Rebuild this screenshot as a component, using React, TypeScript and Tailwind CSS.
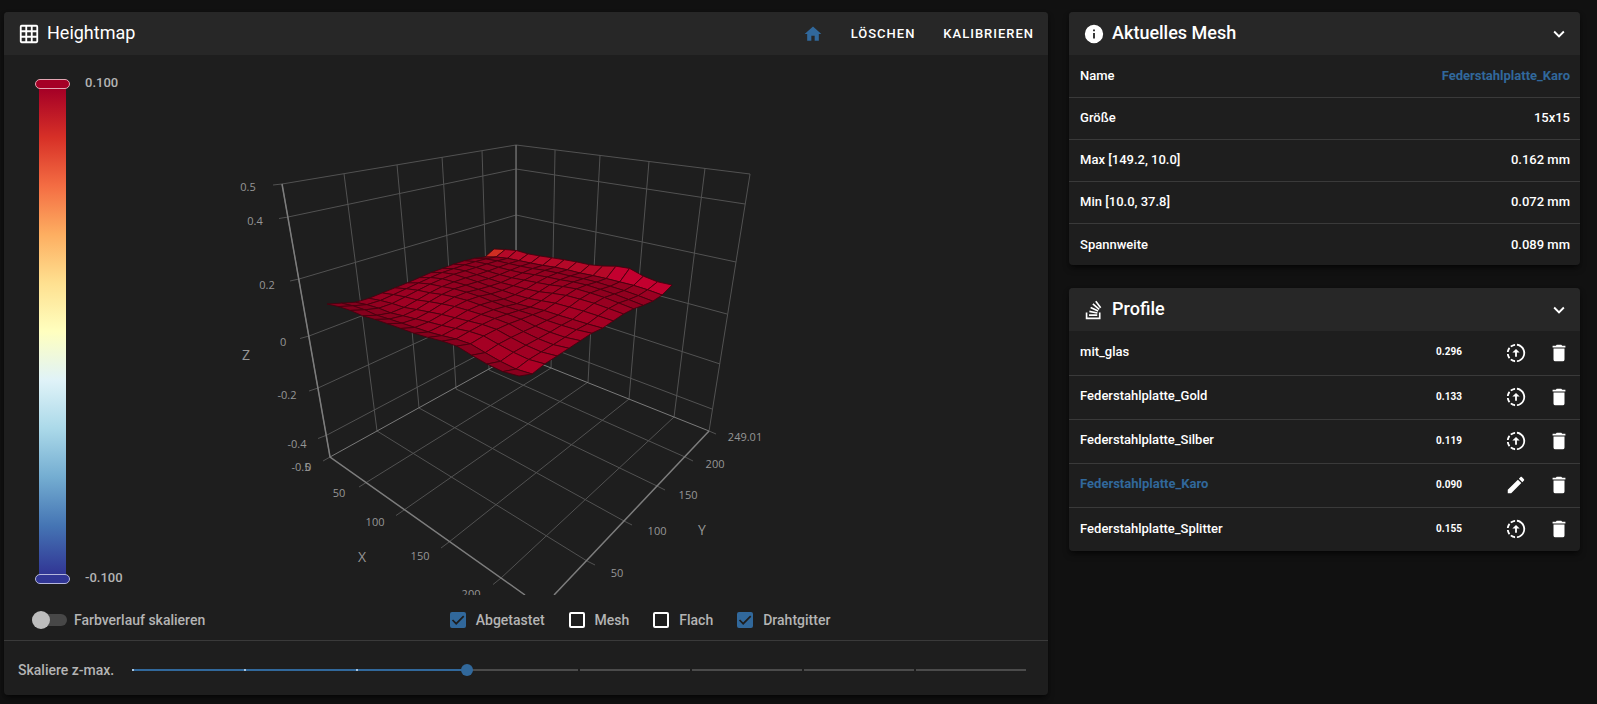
import { useState } from "react";
import type { ReactNode } from "react";

type Pt = [number, number];

const icons = {
  grid: "M10,4V8H14V4H10M16,4V8H20V4H16M16,10V14H20V10H16M16,16V20H20V16H16M14,20V16H10V20H14M8,20V16H4V20H8M8,14V10H4V14H8M8,8V4H4V8H8M10,14H14V10H10V14M4,2H20A2,2 0 0,1 22,4V20A2,2 0 0,1 20,22H4C2.92,22 2,21.1 2,20V4A2,2 0 0,1 4,2Z",
  home: "M10,20V14H14V20H19V12H22L12,3L2,12H5V20H10Z",
  info: "M13,9H11V7H13M13,17H11V11H13M12,2A10,10 0 0,0 2,12A10,10 0 0,0 12,22A10,10 0 0,0 22,12A10,10 0 0,0 12,2Z",
  stack: "M17.36,20.2V14.82H19.15V22H3V14.82H4.8V20.2H17.36M6.77,14.32L7.14,12.56L15.93,14.41L15.56,16.17L6.77,14.32M7.93,10.11L8.69,8.5L16.83,12.28L16.07,13.9L7.93,10.11M10.19,6.12L11.34,4.74L18.24,10.5L17.09,11.87L10.19,6.12M14.64,1.87L20,9.08L18.56,10.15L13.2,2.94L14.64,1.87M6.59,18.41V16.61H15.57V18.41H6.59Z",
  chevron: "M7.41,8.58L12,13.17L16.59,8.58L18,10L12,16L6,10L7.41,8.58Z",
  remove: "M19,4H15.5L14.5,3H9.5L8.5,4H5V6H19M6,19A2,2 0 0,0 8,21H16A2,2 0 0,0 18,19V7H6V19Z",
  pencil: "M20.71,7.04C21.1,6.65 21.1,6 20.71,5.63L18.37,3.29C18,2.9 17.35,2.9 16.96,3.29L15.12,5.12L18.87,8.87M3,17.25V21H6.75L17.81,9.93L14.06,6.18L3,17.25Z",
  upload: "M13,2.03V4.05C17.39,4.59 20.5,8.58 19.96,12.97C19.5,16.61 16.64,19.5 13,19.93V21.93C18.5,21.38 22.5,16.5 21.95,11C21.5,6.25 17.73,2.5 13,2.03M11,2.06C9.05,2.25 7.19,3 5.67,4.26L7.1,5.74C8.22,4.84 9.57,4.26 11,4.06V2.06M4.26,5.67C3,7.19 2.25,9.04 2.05,11H4.05C4.24,9.58 4.8,8.23 5.69,7.1L4.26,5.67M2.06,13C2.26,14.96 3.03,16.81 4.27,18.33L5.69,16.9C4.81,15.77 4.24,14.42 4.06,13H2.06M7.1,18.37L5.67,19.74C7.18,21 9.04,21.79 11,22V20C9.58,19.82 8.23,19.25 7.1,18.37M12,7.5L16,11.5H13V16H11V11.5H8L12,7.5Z",
};

function Icon({ d, className = "size-[22px]" }: { d: string; className?: string }) {
  return (
    <svg viewBox="0 0 24 24" fill="currentColor" aria-hidden="true" className={className}>
      <path d={d} />
    </svg>
  );
}

/* ── Surface plot ── */

// Box edges of the plot, projected to the drawing plane
const leftTop: Pt[] = [[282, 184], [344, 174], [397, 165], [442, 157], [482, 151], [516, 145]];
const leftBottom: Pt[] = [[330, 457], [377, 431], [419, 408], [456, 389], [489, 370], [516, 354]];
const rightTop: Pt[] = [[516, 145], [555, 150], [600, 155], [649, 161], [705, 168], [750, 174]];
const rightBottom: Pt[] = [[516, 354], [551, 368], [588, 382], [629, 399], [674, 417], [709, 431]];
const zLeft: Pt[] = [[282, 184], [288, 217], [299, 279], [309, 336], [318, 388], [327, 435]];
const zBack: Pt[] = [[516, 145], [516, 169], [516, 215], [516, 257], [516, 297], [516, 335]];
const zRight: Pt[] = [[750, 174], [745, 204], [736, 262], [727, 314], [720, 364], [712, 409]];
const xAxis: Pt[] = [[367, 482], [404, 510], [449, 542], [501, 578]];
const yAxis: Pt[] = [[587, 561], [624, 521], [657, 486], [685, 457]];

const gridLines: Pt[][] = [
  ...leftTop.map((p, i) => [p, leftBottom[i]]),
  ...rightTop.slice(1).map((p, i) => [p, rightBottom[i + 1]]),
  ...zLeft.map((p, i) => [p, zBack[i], zRight[i]]),
  ...xAxis.map((p, i) => [p, rightBottom[i + 1]]),
  ...yAxis.map((p, i) => [p, leftBottom[i + 1]]),
  // tick marks
  ...zLeft.map(([x, y], i): Pt[] => [[x, y], [x - 9, y + 1 + i / 2]]),
  ...xAxis.map(([x, y], i): Pt[] => [[x, y], [x - 8, y + 5 + i / 2]]),
  ...yAxis.map(([x, y]): Pt[] => [[x, y], [x + 8, y + 4]]),
  [[330, 457], [323, 461]],
  [[709, 431], [716, 434]],
];

const axisLines: Pt[][] = [
  [[282, 184], [330, 457], [525, 595]],
  [[709, 431], [554, 595]],
];

const tickLabels: [string, number, number][] = [
  ["0.5", 248, 186], ["0.4", 255, 220], ["0.2", 267, 284], ["0", 283, 341],
  ["-0.2", 287, 394], ["-0.4", 297, 443], ["-0.5", 301, 466], ["0", 308, 466],
  ["50", 339, 492], ["100", 375, 521], ["150", 420, 555], ["200", 471, 593],
  ["50", 617, 572], ["100", 657, 530], ["150", 688, 494], ["200", 715, 463],
  ["249.01", 745, 436],
];

const axisNames: [string, number, number][] = [["Z", 246, 354], ["X", 362, 556], ["Y", 702, 529]];

// Outline of the probed surface
const southEdge: Pt[] = [
  [327, 304], [345, 308], [363, 316], [377, 320], [397, 327], [413, 333], [430, 338],
  [450, 343], [463, 349], [477, 359], [493, 367], [510, 375], [519, 376],
];
const eastEdge: Pt[] = [
  [519, 376], [532, 374], [543, 365], [560, 354], [577, 343], [590, 334], [605, 327],
  [617, 318], [630, 310], [650, 303], [662, 295],
];
const westEdge: Pt[] = [[327, 304], [360, 302], [377, 295], [407, 283], [430, 273], [457, 263], [470, 259], [485, 257]];
const innerNorth: Pt[] = [
  [485, 257], [500, 257], [516, 260], [540, 265], [560, 268], [580, 273], [600, 277],
  [620, 282], [640, 287], [662, 295],
];
const northEdge: Pt[] = [
  [494, 249], [515, 250], [523, 253], [540, 256], [560, 259], [577, 262], [595, 266],
  [613, 266], [627, 267], [643, 276], [658, 282], [672, 285],
];

// Point at fraction t (0..1) of a line, measured along x
function along(line: Pt[], t: number): Pt {
  const x = line[0][0] + (line[line.length - 1][0] - line[0][0]) * t;
  const i = Math.max(1, line.findIndex((p) => p[0] >= x - 0.001));
  const [a, b] = [line[i - 1], line[i]];
  return [x, a[1] + ((b[1] - a[1]) * (x - a[0])) / (b[0] - a[0])];
}

// Perspective spacing: k > 1 starts narrow and ends wide
const warp = (t: number, k: number) => t / (t + k * (1 - t));

const N = 14;

function buildSurface(): Pt[][] {
  const rows: Pt[][] = [];
  for (let j = 0; j < N; j++) {
    const v = j / (N - 1);
    const row: Pt[] = [];
    for (let i = 0; i <= N; i++) {
      const u = i / N;
      const s = along(southEdge, warp(u, 1.2));
      const n = along(innerNorth, warp(u, 1.15));
      const w = along(westEdge, warp(v, 0.83));
      const e = along(eastEdge, warp(v, 0.83));
      const a = warp(u, 1.18);
      const b = warp(v, 0.83);
      const mix = (c: 0 | 1) =>
        (1 - b) * s[c] + b * n[c] + (1 - a) * w[c] + a * e[c] -
        ((1 - a) * (1 - b) * southEdge[0][c] + a * (1 - b) * southEdge[12][c] +
          (1 - a) * b * innerNorth[0][c] + a * b * innerNorth[9][c]);
      const bump = 5 * Math.sin(u * Math.PI) * Math.sin(v * Math.PI) * Math.sin(v * 8 + u * 5);
      row.push([mix(0), mix(1) + bump]);
    }
    rows.push(row);
  }
  rows.push(Array.from({ length: N + 1 }, (_, i) => along(northEdge, warp(i / N, 1.15))));
  return rows;
}

const surface = buildSurface();

const cells = Array.from({ length: N * N }, (_, n) => {
  const j = N - 1 - Math.floor(n / N);
  const i = n % N;
  const quad = [surface[j][i], surface[j][i + 1], surface[j + 1][i + 1], surface[j + 1][i]];
  const slope = quad[0][1] + quad[1][1] - quad[2][1] - quad[3][1];
  const light = Math.max(26, Math.min(34, 25 + slope * 0.45));
  let fill = `hsl(347 100% ${light}%)`;
  if (j === N - 1) fill = i === 0 ? "#cf2e22" : i < 10 ? "#b50828" : "#c3002f";
  return { points: quad.join(" "), fill };
});

function SurfaceChart() {
  return (
    <svg viewBox="232 70 816 525" className="h-[525px] w-full" role="img" aria-label="Heightmap">
      <g fill="none" stroke="#525252" strokeWidth="1">
        {gridLines.map((l, i) => <polyline key={i} points={l.join(" ")} />)}
      </g>
      <g fill="none" stroke="#7a7a7a" strokeWidth="1">
        <polyline points="330,457 516,354 709,431" />
        <polyline points="516,145 516,354" />
      </g>
      <g fill="none" stroke="#7d7d7d" strokeWidth="1.5">
        {axisLines.map((l, i) => <polyline key={i} points={l.join(" ")} />)}
      </g>
      <g stroke="#48000f" strokeWidth="0.9" strokeLinejoin="round">
        {cells.map((c, i) => <polygon key={i} points={c.points} fill={c.fill} />)}
      </g>
      <g fill="#969696" textAnchor="middle" dominantBaseline="central" className="font-['Open_Sans',sans-serif] text-[11px]">
        {tickLabels.map(([t, x, y], i) => <text key={i} x={x} y={y}>{t}</text>)}
      </g>
      <g fill="#969696" textAnchor="middle" dominantBaseline="central" className="font-['Open_Sans',sans-serif] text-[14px]">
        {axisNames.map(([t, x, y]) => <text key={t} x={x} y={y}>{t}</text>)}
      </g>
    </svg>
  );
}

/* ── Controls ── */

function ColorScale() {
  return (
    <div className="flex h-[505px] gap-[15px] pl-[31px] text-[13px] font-medium leading-[10px] text-[#b4b4b4]">
      <div className="flex w-[35px] flex-col items-center">
        <div className="h-[10px] w-full shrink-0 rounded-full border border-[#e3a5b2] bg-[#a50026]" />
        <div className="w-[27px] flex-1 bg-[linear-gradient(#a50026,#d73027,#f46d43,#fdae61,#fee090,#ffffbf,#e0f3f8,#abd9e9,#74add1,#4575b4,#313695)]" />
        <div className="h-[10px] w-full shrink-0 rounded-full border border-[#b4b6dc] bg-[#313695]" />
      </div>
      <div className="-mt-px flex flex-col justify-between pb-px">
        <span>0.100</span>
        <span>-0.100</span>
      </div>
    </div>
  );
}

function CheckOption({ label, initial }: { label: string; initial: boolean }) {
  const [checked, setChecked] = useState(initial);
  return (
    <label className="flex cursor-pointer items-center gap-[10px]">
      <span className="grid size-4">
        <input
          type="checkbox"
          checked={checked}
          onChange={() => setChecked(!checked)}
          className="col-start-1 row-start-1 size-4 appearance-none rounded-[2px] border-2 border-white checked:border-[#31689b] checked:bg-[#31689b]"
        />
        {checked && (
          <svg viewBox="0 0 16 16" className="pointer-events-none col-start-1 row-start-1 size-4" aria-hidden="true">
            <path d="M2.5 8 L6.2 11.7 L13.7 4.2" fill="none" stroke="#1e1e1e" strokeWidth="1.7" />
          </svg>
        )}
      </span>
      {label}
    </label>
  );
}

function ZScale() {
  const [value, setValue] = useState(4);
  return (
    <div className="flex items-center gap-[18px] pb-[17px] pl-[14px] pr-[22px] pt-[21px] text-[14px] font-medium leading-4 text-[#b4b4b4]">
      <label htmlFor="zmax">Skaliere z-max.</label>
      <div className="relative flex h-4 flex-1 items-center">
        <div className="flex h-[2px] flex-1 gap-[2px]">
          {Array.from({ length: 8 }, (_, i) => (
            <span
              key={i}
              className={i < value - 1 ? "-mr-[2px] flex-1 border-l-2 border-[#a9c4dd] bg-[#31689b]" : "flex-1 bg-[#4b4b4b]"}
            />
          ))}
        </div>
        <input
          id="zmax"
          type="range"
          min={1}
          max={9}
          value={value}
          onChange={(e) => setValue(Number(e.target.value))}
          className="absolute -inset-x-[6px] h-4 appearance-none bg-transparent [&::-webkit-slider-thumb]:size-3 [&::-webkit-slider-thumb]:appearance-none [&::-webkit-slider-thumb]:rounded-full [&::-webkit-slider-thumb]:bg-[#31689b]"
        />
      </div>
    </div>
  );
}

function Panel({ icon, title, actions, children }: { icon: string; title: string; actions: ReactNode; children: ReactNode }) {
  return (
    <section className="overflow-hidden rounded-[4px] bg-[#1e1e1e] shadow-md shadow-black/50">
      <header className="flex h-[43px] items-center gap-[7px] bg-[#272727] pl-[14px]">
        <Icon d={icon} />
        <h2 className="flex-1 pb-0.5 text-[18px] leading-6">{title}</h2>
        {actions}
      </header>
      {children}
    </section>
  );
}

const collapse = (
  <button type="button" aria-label="Einklappen" className="mr-[10px]">
    <Icon d={icons.chevron} />
  </button>
);

const meshInfo = [
  ["Größe", "15x15"],
  ["Max [149.2, 10.0]", "0.162 mm"],
  ["Min [10.0, 37.8]", "0.072 mm"],
  ["Spannweite", "0.089 mm"],
];

const profiles = [
  { name: "mit_glas", range: "0.296" },
  { name: "Federstahlplatte_Gold", range: "0.133" },
  { name: "Federstahlplatte_Silber", range: "0.119" },
  { name: "Federstahlplatte_Karo", range: "0.090", active: true },
  { name: "Federstahlplatte_Splitter", range: "0.155" },
];

export default function App() {
  const [scaled, setScaled] = useState(false);

  return (
    <main className="grid min-h-screen grid-cols-[47fr_23fr] items-start gap-[21px] bg-[#111111] pb-2 pl-1 pr-[17px] pt-3 font-[Roboto,sans-serif] text-white">
      <Panel
        icon={icons.grid}
        title="Heightmap"
        actions={
          <div className="flex items-center gap-7 pr-[14px] text-[13px] font-medium tracking-[1px]">
            <button type="button" aria-label="Home" className="text-[#31689b]">
              <Icon d={icons.home} className="size-5" />
            </button>
            <button type="button">LÖSCHEN</button>
            <button type="button">KALIBRIEREN</button>
          </div>
        }
      >
        <div className="flex">
          <div className="w-[228px] shrink-0 pt-6">
            <ColorScale />
          </div>
          <div className="min-w-0 flex-1 pt-[15px]">
            <SurfaceChart />
          </div>
        </div>
        <div className="flex h-[45px] items-center pt-[5px] text-[14px] font-medium text-[#b4b4b4]">
          <label className="flex w-[228px] shrink-0 cursor-pointer items-center gap-[7px] pl-7">
            <input
              type="checkbox"
              role="switch"
              checked={scaled}
              onChange={() => setScaled(!scaled)}
              className="flex h-3 w-[35px] appearance-none items-center rounded-full bg-[#474747] before:size-[18px] before:shrink-0 before:rounded-full before:bg-[#bdbdbd] checked:justify-end checked:before:bg-[#31689b]"
            />
            Farbverlauf skalieren
          </label>
          <div className="flex flex-1 justify-center gap-6">
            <CheckOption label="Abgetastet" initial={true} />
            <CheckOption label="Mesh" initial={false} />
            <CheckOption label="Flach" initial={false} />
            <CheckOption label="Drahtgitter" initial={true} />
          </div>
        </div>
        <hr className="border-[#3a3a3a]" />
        <ZScale />
      </Panel>

      <div className="flex flex-col gap-[23px] text-[13px] font-medium">
        <Panel icon={icons.info} title="Aktuelles Mesh" actions={collapse}>
          <table className="w-full">
            <tbody className="divide-y divide-[#3a3a3a]">
              <tr className="h-[42px]">
                <th scope="row" className="pl-[11px] text-left font-medium">Name</th>
                <td className="pr-[10px] text-right font-bold">
                  <a href="#" className="text-[#31689b]">Federstahlplatte_Karo</a>
                </td>
              </tr>
              {meshInfo.map(([label, value]) => (
                <tr key={label} className="h-[42px]">
                  <th scope="row" className="pl-[11px] text-left font-medium">{label}</th>
                  <td className="pr-[10px] text-right">{value}</td>
                </tr>
              ))}
            </tbody>
          </table>
        </Panel>

        <Panel icon={icons.stack} title="Profile" actions={collapse}>
          <table className="w-full">
            <tbody className="divide-y divide-[#3a3a3a]">
              {profiles.map((p) => (
                <tr key={p.name} className="h-11">
                  <th scope="row" className={p.active ? "pb-0.5 pl-[11px] text-left font-bold text-[#31689b]" : "pb-0.5 pl-[11px] text-left font-medium"}>
                    {p.name}
                  </th>
                  <td className="w-[90px] pb-0.5 text-center text-[10px] font-bold">{p.range}</td>
                  <td className="w-[86px]">
                    <div className="flex justify-end gap-[21px] pr-[10px]">
                      <button type="button" aria-label={p.active ? "Umbenennen" : "Laden"}>
                        <Icon d={p.active ? icons.pencil : icons.upload} />
                      </button>
                      <button type="button" aria-label="Löschen">
                        <Icon d={icons.remove} />
                      </button>
                    </div>
                  </td>
                </tr>
              ))}
            </tbody>
          </table>
        </Panel>
      </div>
    </main>
  );
}
